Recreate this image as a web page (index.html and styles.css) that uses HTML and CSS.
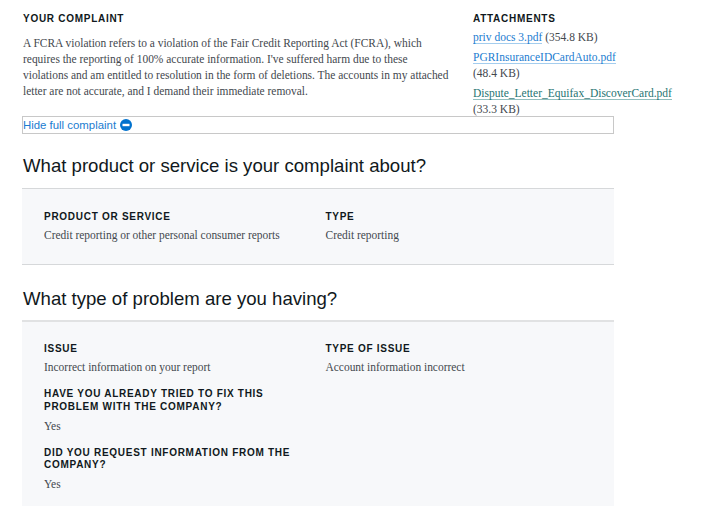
FILE: index.html
```html
<!DOCTYPE html>
<html lang="en">
<head>
<meta charset="utf-8">
<title>Complaint</title>
<link rel="stylesheet" href="styles.css">
</head>
<body>
<main class="page">
  <section class="top">
    <div class="complaint">
      <h4 class="label">Your complaint</h4>
      <p class="narrative">A FCRA violation refers to a violation of the Fair Credit Reporting Act (FCRA), which requires the reporting of 100% accurate information. I've suffered harm due to these violations and am entitled to resolution in the form of deletions. The accounts in my attached letter are not accurate, and I demand their immediate removal.</p>
    </div>
    <div class="attachments">
      <h4 class="label">Attachments</h4>
      <ul class="files">
        <li><a class="file" href="#">priv docs 3.pdf</a> <span class="size">(354.8 KB)</span></li>
        <li><a class="file" href="#">PGRInsuranceIDCardAuto.pdf</a> <span class="size">(48.4 KB)</span></li>
        <li><a class="file visited" href="#">Dispute_Letter_Equifax_DiscoverCard.pdf</a> <span class="size">(33.3 KB)</span></li>
      </ul>
    </div>
  </section>
  <button class="toggle" type="button">Hide full complaint
    <svg class="toggle-icon" viewBox="0 0 12 12" width="12" height="12" aria-hidden="true"><circle cx="6" cy="6" r="6" fill="#0072ce"/><rect x="2.5" y="4.8" width="7" height="2.4" fill="#fff"/></svg>
  </button>

  <h2 class="heading first">What product or service is your complaint about?</h2>
  <section class="panel short">
    <div class="field"><h4 class="label">Product or service</h4><p class="value">Credit reporting or other personal consumer reports</p></div>
    <div class="field"><h4 class="label">Type</h4><p class="value">Credit reporting</p></div>
  </section>

  <h2 class="heading second">What type of problem are you having?</h2>
  <section class="panel tall">
    <div class="field"><h4 class="label">Issue</h4><p class="value">Incorrect information on your report</p></div>
    <div class="field"><h4 class="label">Type of issue</h4><p class="value">Account information incorrect</p></div>
    <div class="field"><h4 class="label">Have you already tried to fix this problem with the company?</h4><p class="value spaced">Yes</p></div>
    <div></div>
    <div class="field"><h4 class="label">Did you request information from the company?</h4><p class="value spaced">Yes</p></div>
  </section>
</main>
</body>
</html>
```
FILE: styles.css
```css
* { box-sizing: border-box; }
html, body { margin: 0; padding: 0; background: #fff; }
body { font-family: "Liberation Serif", serif; font-size: 11.5px; line-height: 16px; color: #43484e; height: 506px; overflow: hidden; }
.page { padding: 12px 0 0 22px; }
.top { display: flex; gap: 21px; height: 104px; }
.complaint { width: 430px; flex: none; padding-left: 1px; }
.attachments { width: 190px; flex: none; }
.label { margin: 0; font: bold 10px/13px "Liberation Sans", sans-serif; letter-spacing: 0.72px; text-transform: uppercase; color: #101820; }
.narrative { margin: 10px 0 0; font-size: 11.45px; }
.files { list-style: none; margin: 4px 0 0; padding: 0; }
.files li { margin-bottom: 4px; }
.size { white-space: nowrap; }
.file { color: #1b7cd0; text-decoration: none; border-bottom: 1px solid #a4cdee; }
.file.visited { color: #1f7472; border-bottom-color: #93bfbe; }
.toggle { display: flex; align-items: center; gap: 4px; width: 592px; height: 18px; margin: 0; padding: 0 0 1px; background: #fff; border: 1px solid #c8c8c8; font: 11.4px/16px "Liberation Sans", sans-serif; color: #1b7cd0; text-align: left; }
.toggle-icon { flex: none; }
.heading { margin: 0; padding-left: 1px; font: 400 18.6px/26px "Liberation Sans", sans-serif; color: #101820; }
.heading.first { margin-top: 19px; }
.heading.second { margin-top: 21px; }
.panel { display: grid; grid-template-columns: 281.5px 1fr; align-content: start; width: 592px; margin-top: 9px; padding: 22px 22px 0; background: #f7f8fa; border-top: 1px solid #d6d8da; }
.panel.short { height: 77px; border-bottom: 1px solid #d6d8da; }
.panel.tall { height: 186px; margin-top: 8px; padding-top: 21px; border-top: 2px solid #e1e2e3; row-gap: 13px; }
.field { min-width: 0; max-width: 262px; }
.field .label { line-height: 12.6px; }
.value { margin: 3.4px 0 0 0; font-size: 11.45px; }
.value.spaced { margin-top: 4.4px; }
```
